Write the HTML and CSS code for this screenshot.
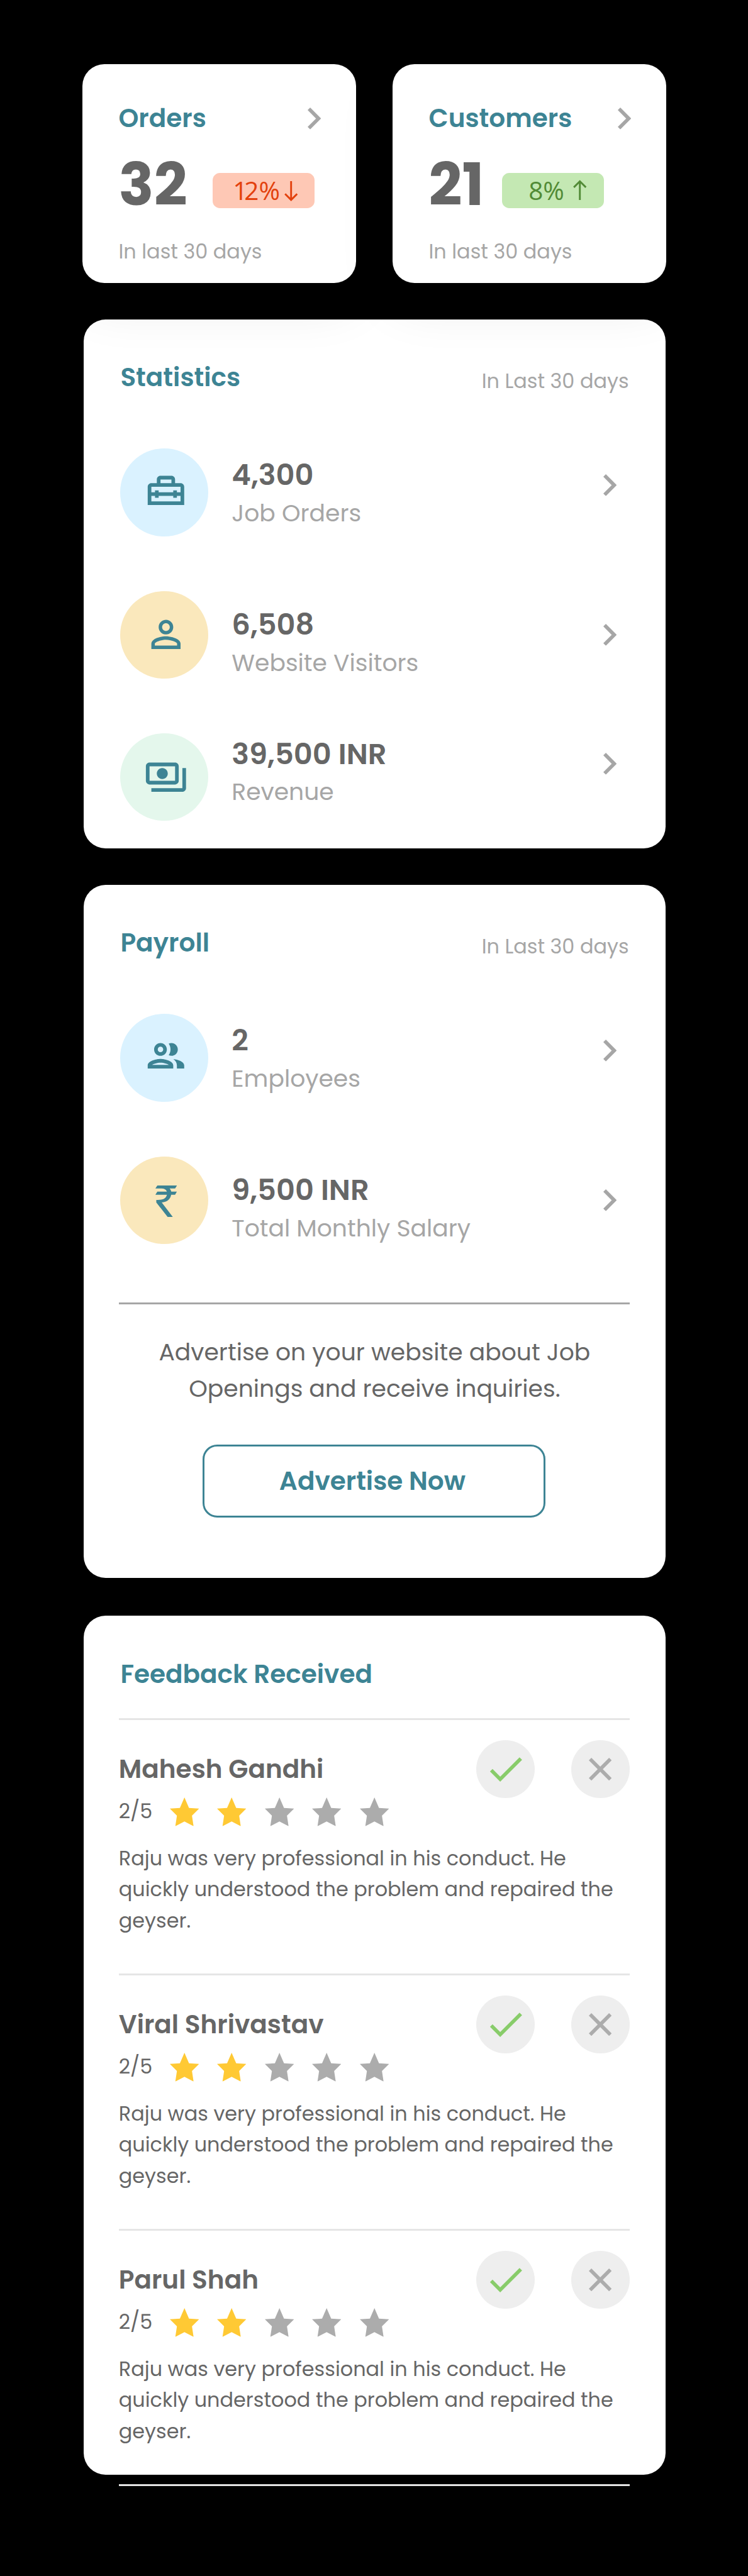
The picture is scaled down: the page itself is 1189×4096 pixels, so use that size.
FILE: index.html
```html
<!DOCTYPE html>
<html lang="en">
<head>
  <meta charset="utf-8">
  <title>Dashboard</title>
  <link rel="stylesheet" href="styles.css">
</head>
<body>
  <svg class="sprite" aria-hidden="true">
    <symbol id="chevron" viewBox="0 0 7.4 12"><path d="M1.4 0l6 6-6 6L0 10.6 4.6 6 0 1.4z"/></symbol>
    <symbol id="star" viewBox="0 0 64 63"><path d="M32 0l10 23 22 1.500-15.500 15.500 3.500 23-20-10.500L12 63l3.500-23L0 24.500 22 23z"/></symbol>
    <symbol id="check" viewBox="0 0 24 24"><path d="M9 16.200L4.800 12l-1.400 1.400L9 19 21 7l-1.400-1.400z"/></symbol>
    <symbol id="cross" viewBox="0 0 12.500 12.500"><path d="M.7.7l11.100 11.100M11.800.7L.7 11.800" fill="none" stroke="currentColor" stroke-width="2"/></symbol>
  </svg>

  <main class="page">
    <div class="summary">
      <section class="tile orders">
        <div class="tile-head">
          <h2 class="title">Orders</h2>
          <svg class="chevron"><use href="#chevron"/></svg>
        </div>
        <div class="tile-main">
          <span class="count">32</span>
          <span class="badge down"><span class="pct"><span class="num">12</span>%</span>
            <svg class="arrow" viewBox="0 0 7.400 11.100"><path d="M3.700 0v10.300M.4 7l3.300 3.300L7 7"/></svg>
          </span>
        </div>
        <p class="period">In last 30 days</p>
      </section>
      <section class="tile customers">
        <div class="tile-head">
          <h2 class="title">Customers</h2>
          <svg class="chevron"><use href="#chevron"/></svg>
        </div>
        <div class="tile-main">
          <span class="count">21</span>
          <span class="badge up"><span class="pct"><span class="num">8</span>%</span>
            <svg class="arrow" viewBox="0 0 7.400 11.100"><path d="M3.700 11.100V.8M.4 4.100L3.700.8 7 4.100"/></svg>
          </span>
        </div>
        <p class="period">In last 30 days</p>
      </section>
    </div>

    <section class="panel statistics">
      <div class="panel-head">
        <h2 class="title">Statistics</h2>
        <span class="period">In Last 30 days</span>
      </div>
      <div class="rows">
        <div class="row jobs">
          <div class="disc blue raised">
            <svg class="icon" viewBox="0 0 24 24"><path fill-rule="evenodd" d="M9 4h6c1.100 0 2 .9 2 2v2h3c1.100 0 2 .9 2 2v10H2V10c0-1.100.9-2 2-2h3V6c0-1.100.9-2 2-2zm0 2v2h6V6zm-5 4v3h2v-1h2v1h8v-1h2v1h2v-3zm0 5v3h16v-3h-2v1h-2v-1H8v1H6v-1z"/></svg>
          </div>
          <div class="row-body">
            <div><div class="value">4,300</div><div class="label">Job Orders</div></div>
            <svg class="chevron"><use href="#chevron"/></svg>
          </div>
        </div>
        <div class="row visitors">
          <div class="disc yellow">
            <svg class="icon" viewBox="0 0 24 24"><path d="M12 5.900c1.160 0 2.100.94 2.100 2.100s-.94 2.100-2.100 2.100S9.900 9.160 9.900 8s.94-2.100 2.100-2.100m0 9c2.970 0 6.100 1.460 6.100 2.100v1.100H5.900V17c0-.64 3.130-2.100 6.100-2.100M12 4C9.790 4 8 5.790 8 8s1.790 4 4 4 4-1.790 4-4-1.790-4-4-4zm0 9c-2.670 0-8 1.340-8 4v3h16v-3c0-2.660-5.330-4-8-4z"/></svg>
          </div>
          <div class="row-body">
            <div><div class="value">6,508</div><div class="label">Website Visitors</div></div>
            <svg class="chevron"><use href="#chevron"/></svg>
          </div>
        </div>
        <div class="row revenue">
          <div class="disc green">
            <svg class="icon" viewBox="0 0 24 24"><path d="M19 14V6c0-1.100-.9-2-2-2H3c-1.100 0-2 .9-2 2v8c0 1.100.9 2 2 2h14c1.100 0 2-.9 2-2zm-2 0H3V6h14v8zm-7-7c-1.660 0-3 1.340-3 3s1.340 3 3 3 3-1.340 3-3-1.340-3-3-3zm13 0v11c0 1.100-.9 2-2 2H4v-2h17V7h2z"/></svg>
          </div>
          <div class="row-body">
            <div><div class="value">39,500 INR</div><div class="label">Revenue</div></div>
            <svg class="chevron"><use href="#chevron"/></svg>
          </div>
        </div>
      </div>
    </section>

    <section class="panel payroll">
      <div class="panel-head">
        <h2 class="title">Payroll</h2>
        <span class="period">In Last 30 days</span>
      </div>
      <div class="rows">
        <div class="row employees">
          <div class="disc blue raised">
            <svg class="icon" viewBox="0 0 24 24"><path d="M9 13.750c-2.340 0-7 1.170-7 3.500V19h14v-1.750c0-2.330-4.660-3.500-7-3.500zM4.340 17c.84-.58 2.870-1.250 4.660-1.250s3.820.67 4.660 1.250H4.340zM9 12c1.930 0 3.500-1.570 3.500-3.500S10.930 5 9 5 5.500 6.570 5.500 8.500 7.070 12 9 12zm0-5c.83 0 1.500.67 1.500 1.500S9.830 10 9 10s-1.500-.67-1.500-1.500S8.170 7 9 7zm7.040 6.810c1.160.84 1.960 1.960 1.960 3.440V19h4v-1.750c0-2.020-3.500-3.170-5.960-3.440zM15 12c1.930 0 3.500-1.570 3.500-3.500S16.930 5 15 5c-.54 0-1.040.13-1.500.35.63.89 1 1.980 1 3.150s-.37 2.260-1 3.150c.46.22.96.35 1.500.35z"/></svg>
          </div>
          <div class="row-body">
            <div><div class="value">2</div><div class="label">Employees</div></div>
            <svg class="chevron"><use href="#chevron"/></svg>
          </div>
        </div>
        <div class="row salary">
          <div class="disc yellow lowered">
            <svg class="rupee" viewBox="60 60 142 209"><path d="M73 60H202L190 80H154Q162 89 165 100H202L190 121H164C159 150 138 169 102 172L176 269H142L66 172V155C106 157 130 148 136 121H60L73 100H136C131 86 118 80 100 80H60Z"/></svg>
          </div>
          <div class="row-body">
            <div><div class="value">9,500 INR</div><div class="label">Total Monthly Salary</div></div>
            <svg class="chevron"><use href="#chevron"/></svg>
          </div>
        </div>
      </div>
      <div class="advert">
        <p class="pitch">Advertise on your website about Job<br>Openings and receive inquiries.</p>
        <button class="cta" type="button">Advertise Now</button>
      </div>
    </section>

    <section class="panel feedback">
      <div class="panel-head">
        <h2 class="title">Feedback Received</h2>
      </div>
      <div class="reviews">
        <article class="review">
          <div class="review-head">
            <div>
              <h3 class="name">Mahesh Gandhi</h3>
              <div class="rating"><span class="score">2/5</span>
                <svg class="star on"><use href="#star"/></svg><svg class="star on"><use href="#star"/></svg><svg class="star"><use href="#star"/></svg><svg class="star"><use href="#star"/></svg><svg class="star"><use href="#star"/></svg>
              </div>
            </div>
            <div class="actions">
              <button class="action accept" type="button" aria-label="Accept"><svg class="check"><use href="#check"/></svg></button>
              <button class="action reject" type="button" aria-label="Reject"><svg class="cross"><use href="#cross"/></svg></button>
            </div>
          </div>
          <p class="comment">Raju was very professional in his conduct. He<br>quickly understood the problem and repaired the<br>geyser.</p>
        </article>
        <article class="review">
          <div class="review-head">
            <div>
              <h3 class="name">Viral Shrivastav</h3>
              <div class="rating"><span class="score">2/5</span>
                <svg class="star on"><use href="#star"/></svg><svg class="star on"><use href="#star"/></svg><svg class="star"><use href="#star"/></svg><svg class="star"><use href="#star"/></svg><svg class="star"><use href="#star"/></svg>
              </div>
            </div>
            <div class="actions">
              <button class="action accept" type="button" aria-label="Accept"><svg class="check"><use href="#check"/></svg></button>
              <button class="action reject" type="button" aria-label="Reject"><svg class="cross"><use href="#cross"/></svg></button>
            </div>
          </div>
          <p class="comment">Raju was very professional in his conduct. He<br>quickly understood the problem and repaired the<br>geyser.</p>
        </article>
        <article class="review">
          <div class="review-head">
            <div>
              <h3 class="name">Parul Shah</h3>
              <div class="rating"><span class="score">2/5</span>
                <svg class="star on"><use href="#star"/></svg><svg class="star on"><use href="#star"/></svg><svg class="star"><use href="#star"/></svg><svg class="star"><use href="#star"/></svg><svg class="star"><use href="#star"/></svg>
              </div>
            </div>
            <div class="actions">
              <button class="action accept" type="button" aria-label="Accept"><svg class="check"><use href="#check"/></svg></button>
              <button class="action reject" type="button" aria-label="Reject"><svg class="cross"><use href="#cross"/></svg></button>
            </div>
          </div>
          <p class="comment">Raju was very professional in his conduct. He<br>quickly understood the problem and repaired the<br>geyser.</p>
        </article>
      </div>
    </section>
  </main>
</body>
</html>
```
FILE: styles.css
```css
/* 0.1rem is one layout unit; the page is 410 units wide. */
html {
  font-size: 29px;
  background: #000;
}

* {
  box-sizing: border-box;
}

body {
  margin: 0;
  background: #000;
  font-family: Poppins, Inter, sans-serif;
  color: #666;
}

h2, h3, p {
  margin: 0;
}

svg {
  display: block;
  fill: currentColor;
  flex: none;
}

button {
  padding: 0;
  border: 0;
  font-family: inherit;
}

.sprite {
  display: none;
}

.page {
  width: 41rem;
  height: 141.2rem;
  padding: 3.5rem 4.5rem 0 4.5rem;
  display: flex;
  flex-direction: column;
  gap: 2rem;
}

.title {
  font-size: 1.4rem;
  line-height: 2.1rem;
  font-weight: 600;
  color: #3d8494;
  white-space: nowrap;
}

.period {
  font-size: 1.1rem;
  line-height: 1.7rem;
  color: #a6a6a6;
  white-space: nowrap;
}

.chevron {
  width: 0.74rem;
  height: 1.2rem;
  color: #a6a6a6;
}

/* Summary tiles */
.summary {
  position: relative;
  z-index: 1;
  display: flex;
  gap: 2rem;
}

.tile {
  width: 15rem;
  height: 12rem;
  padding: 1.96rem 1.91rem 0 2rem;
  border-radius: 1.2rem;
  background: #fff;
  box-shadow: 0 1rem 3rem rgba(0, 0, 0, 0.11);
}

.tile-head {
  display: flex;
  align-items: center;
  justify-content: space-between;
}

.tile-main {
  display: flex;
  margin-top: 0.99rem;
}

.tile .period {
  margin-top: 1.225rem;
}

.count {
  font-size: 3.2rem;
  line-height: 3.2rem;
  font-weight: 700;
}

.orders .count { width: 5.15rem; }
.customers .count { width: 4rem; }

.badge {
  width: 5.6rem;
  height: 1.9rem;
  margin-top: 0.95rem;
  padding-right: 0.93rem;
  border-radius: 0.4rem;
  display: flex;
  justify-content: space-between;
  font-family: "Open Sans", "Noto Sans", sans-serif;
  font-size: 1.4rem;
  line-height: 1.9rem;
}

.badge.down {
  padding-left: 1.12rem;
  background: #fec8b5;
  color: #e3410d;
}

.badge.up {
  padding-left: 1.47rem;
  background: #c4e8b3;
  color: #528b36;
}

.num { font-weight: 500; }

.down .num {
  letter-spacing: -0.13em;
  margin-right: 0.13em;
}

.arrow {
  width: 0.74rem;
  height: 1.11rem;
  fill: none;
  stroke: currentColor;
  stroke-width: 1;
}

.down .arrow { margin-top: 0.42rem; }
.up .arrow { margin-top: 0.35rem; }

/* Panels */
.panel {
  width: 31.9rem;
  margin-left: 0.1rem;
  padding: 2.16rem 2rem 0;
  border-radius: 1.2rem;
  background: #fff;
}

.statistics { height: 29rem; }
.payroll { height: 38rem; }
.feedback { height: 47.1rem; margin-top: 0.1rem; }

.panel-head {
  height: 2.1rem;
  display: flex;
  justify-content: space-between;
}

.panel-head .period {
  margin: 0.4rem 0.03rem 0 0;
}

.rows {
  margin-top: 2.84rem;
  display: flex;
  flex-direction: column;
  gap: 3rem;
}

.row {
  height: 4.8rem;
  display: flex;
  gap: 1.3rem;
}

.disc {
  width: 4.8rem;
  height: 4.8rem;
  padding-left: 0.2rem;
  border-radius: 50%;
  display: flex;
  flex: none;
  align-items: center;
  justify-content: center;
  color: #3d8494;
}

.disc.raised { padding-bottom: 0.2rem; }
.disc.lowered { padding-top: 0.14rem; }
.disc.blue { background: #daf2ff; }
.disc.yellow { background: #fae8bc; }
.disc.green { background: #e4f7ec; }

.icon {
  width: 2.4rem;
  height: 2.4rem;
}

.rupee {
  width: 1.18rem;
  height: 1.74rem;
}

.row-body {
  flex: 1;
  display: flex;
  justify-content: space-between;
  align-items: flex-start;
  margin-top: 0.44rem;
  padding-right: 0.7rem;
  white-space: nowrap;
}

.visitors .row-body, .salary .row-body { margin-top: 0.84rem; }
.revenue .row-body { margin-top: 0.13rem; }

.row-body .chevron { margin-top: 0.96rem; }

.value {
  font-size: 1.6rem;
  line-height: 2rem;
  font-weight: 600;
}

.label {
  margin-top: 0.205rem;
  font-size: 1.3rem;
  line-height: 1.8rem;
  color: #a6a6a6;
}

/* Advertising */
.advert {
  width: 28rem;
  margin: 3.2rem 0 0 -0.07rem;
  padding-top: 1.64rem;
  border-top: 3px solid #a6a6a6;
  display: flex;
  flex-direction: column;
  align-items: center;
}

.pitch {
  font-size: 1.3rem;
  line-height: 2rem;
  text-align: center;
  white-space: nowrap;
}

.cta {
  width: 18.8rem;
  height: 4rem;
  margin: 2.055rem 0.06rem 0 0;
  padding-right: 0.18rem;
  border: 3px solid #3d8494;
  border-radius: 0.8rem;
  background: #fff;
  color: #3d8494;
  font-size: 1.4rem;
  line-height: 3.8rem;
  font-weight: 600;
}

/* Feedback */
.reviews {
  width: 28rem;
  margin: 1.34rem 0 0 -0.09rem;
}

.review {
  height: 14rem;
  border-top: 3px solid #e5e5e5;
}

/* The closing rule of the list falls below the panel's edge. */
.review:last-child {
  height: 14.1rem;
  border-bottom: 3px solid #e5e5e5;
}

.review-head {
  height: 5.87rem;
  display: flex;
  justify-content: space-between;
}

.name {
  margin-top: 1.65rem;
  font-size: 1.4rem;
  line-height: 2.1rem;
  font-weight: 600;
  white-space: nowrap;
}

.rating {
  margin-top: 0.435rem;
  height: 1.7rem;
  display: flex;
  align-items: center;
  gap: 1rem;
}

.score {
  width: 1.8rem;
  font-size: 1.1rem;
  line-height: 1.7rem;
  white-space: nowrap;
}

.star {
  width: 1.6rem;
  height: 1.58rem;
  color: #acacac;
}

.star.on { color: #ffc934; }

.actions {
  display: flex;
  gap: 2rem;
  padding-top: 1.1rem;
}

.action {
  width: 3.2rem;
  height: 3.2rem;
  border-radius: 50%;
  background: #eee;
  display: flex;
  align-items: center;
  justify-content: center;
}

.accept { color: #88cc6a; }
.reject { color: #acacac; }

.check {
  width: 2.4rem;
  height: 2.4rem;
}

.cross {
  width: 1.25rem;
  height: 1.25rem;
}

.comment {
  margin-top: 0.895rem;
  font-size: 1.1rem;
  line-height: 1.7rem;
  white-space: nowrap;
}
```
